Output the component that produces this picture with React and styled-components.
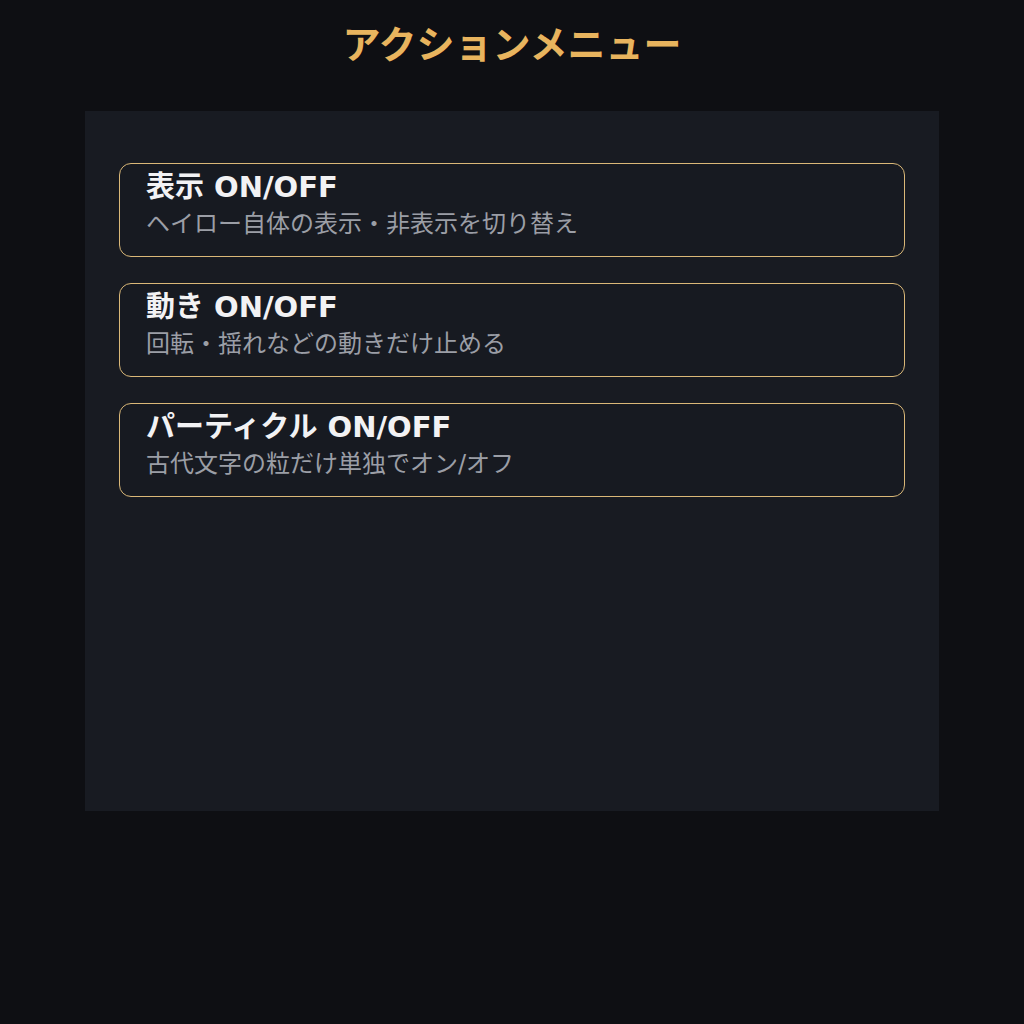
import React from "react";
import styled, { createGlobalStyle } from "styled-components";

const GlobalStyle = createGlobalStyle`
  html, body {
    margin: 0;
    padding: 0;
    background: #0e0f13;
    font-family: "DejaVu Sans", "Noto Sans CJK JP", sans-serif;
  }
`;

const Page = styled.div`
  min-height: 1024px;
  display: flex;
  flex-direction: column;
  align-items: center;
`;

const Title = styled.h1`
  margin: 18px 0 0 0;
  height: 93px;
  font-size: 38px;
  line-height: 54px;
  font-weight: 700;
  color: #e8b45e;
`;

const Panel = styled.div`
  width: 854px;
  height: 700px;
  box-sizing: border-box;
  background: #181b22;
  padding: 52px 34px;
  display: flex;
  flex-direction: column;
  gap: 26px;
`;

const ActionCard = styled.button`
  all: unset;
  box-sizing: border-box;
  height: 94px;
  border: 1.75px solid #dab878;
  border-radius: 12px;
  background: #171a21;
  padding: 0 26px 10px;
  display: flex;
  flex-direction: column;
  justify-content: center;
  cursor: pointer;
`;

const CardTitle = styled.div`
  font-size: 29px;
  font-weight: 700;
  line-height: 38px;
  color: #f2f2f4;
`;

const CardDesc = styled.div`
  font-size: 24px;
  line-height: 36px;
  color: #9b9ea6;
`;

const actions = [
  { title: "表示 ON/OFF", desc: "ヘイロー自体の表示・非表示を切り替え" },
  { title: "動き ON/OFF", desc: "回転・揺れなどの動きだけ止める" },
  { title: "パーティクル ON/OFF", desc: "古代文字の粒だけ単独でオン/オフ" },
];

export default function App() {
  return (
    <>
      <GlobalStyle />
      <Page>
        <Title>アクションメニュー</Title>
        <Panel>
          {actions.map((a) => (
            <ActionCard key={a.title}>
              <CardTitle>{a.title}</CardTitle>
              <CardDesc>{a.desc}</CardDesc>
            </ActionCard>
          ))}
        </Panel>
      </Page>
    </>
  );
}
